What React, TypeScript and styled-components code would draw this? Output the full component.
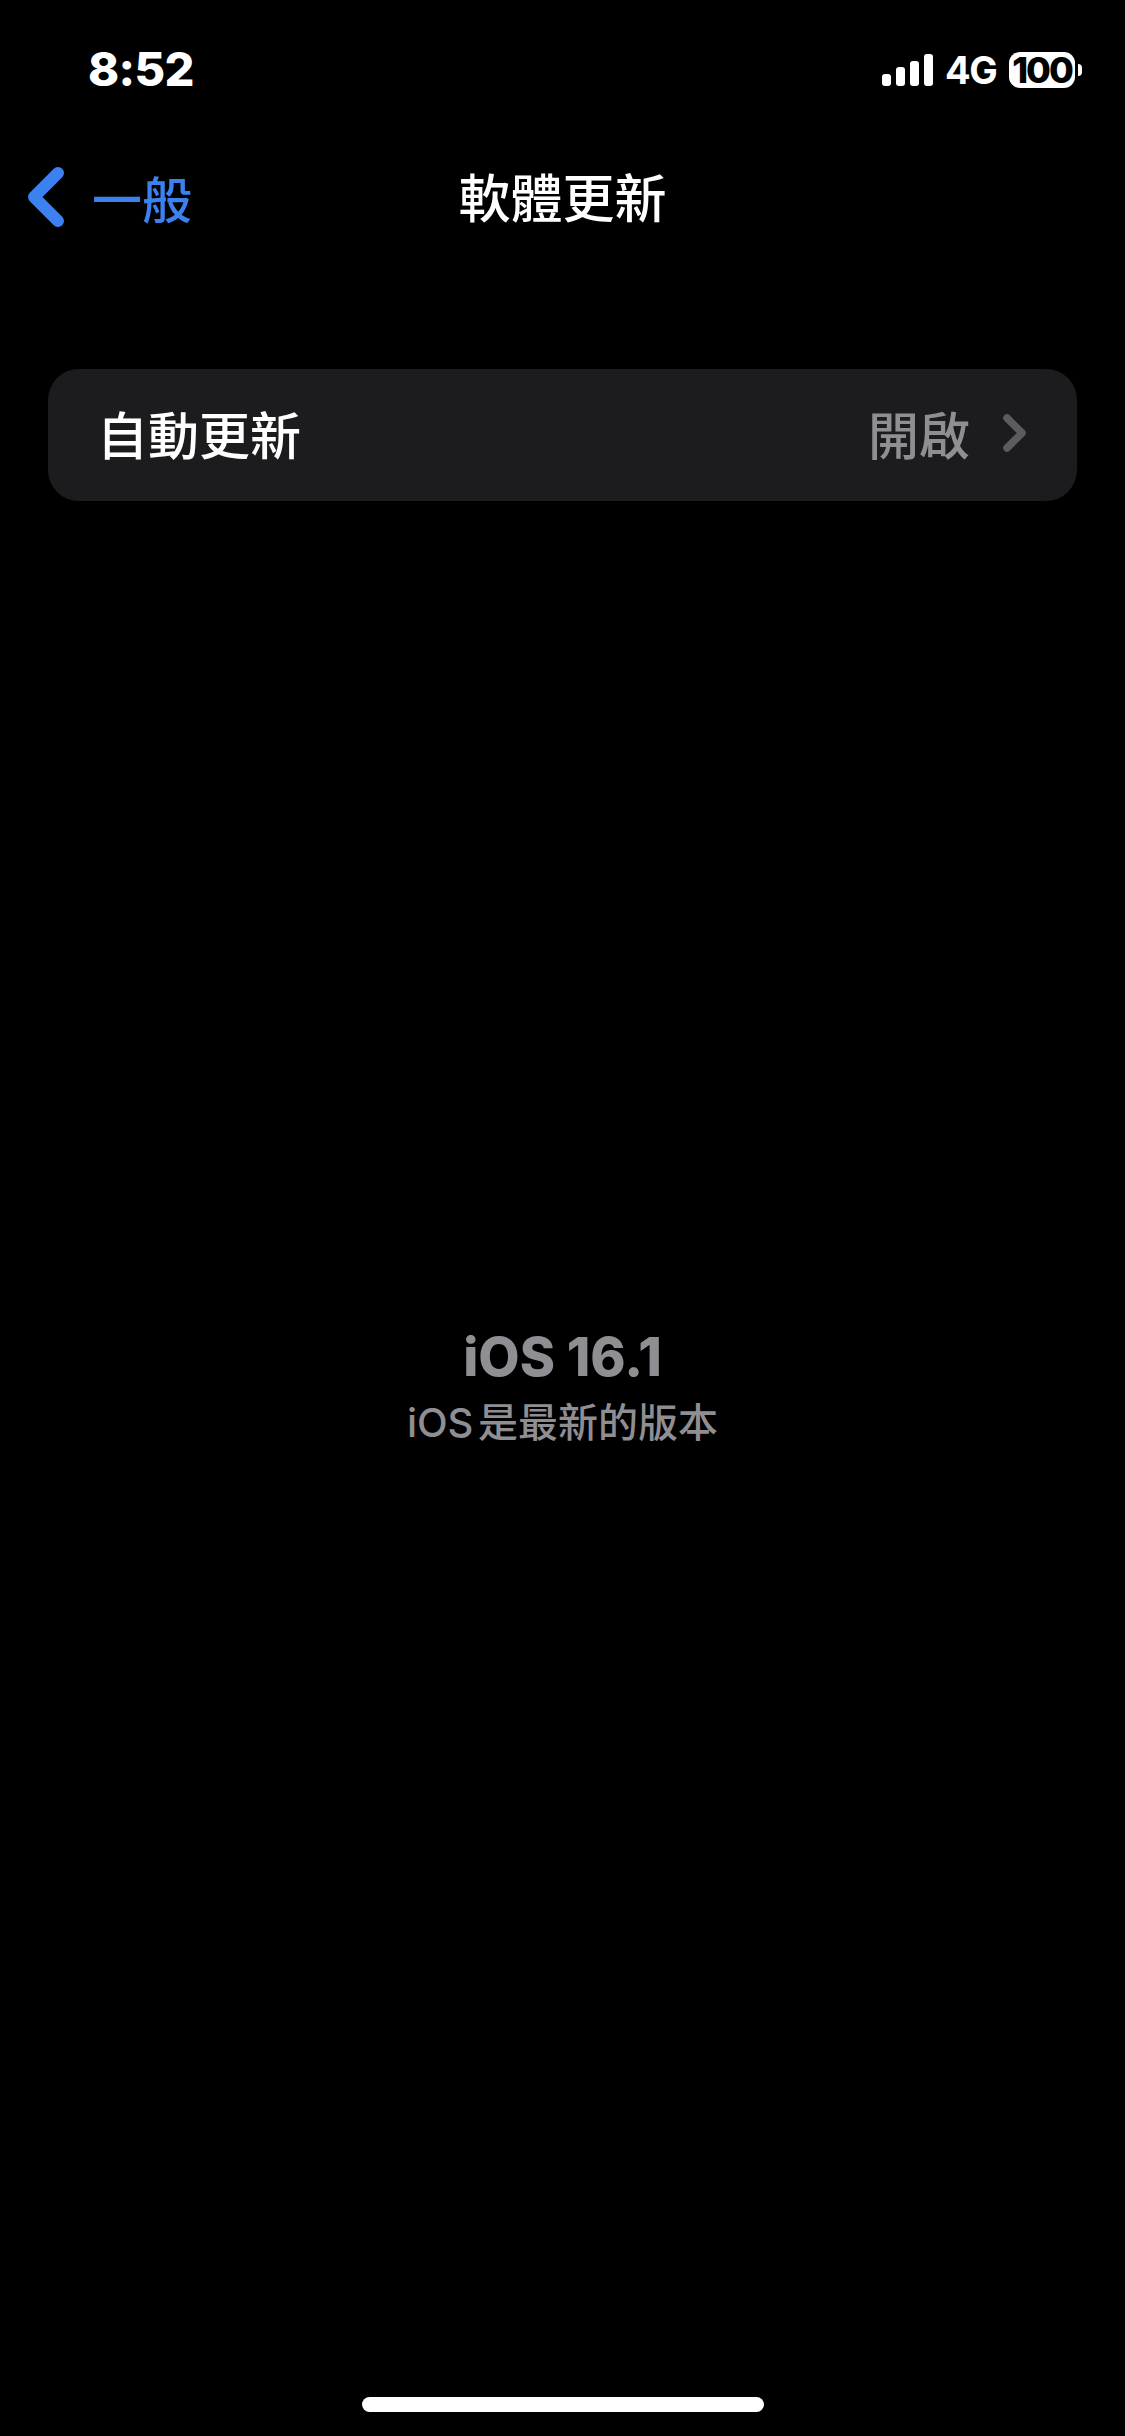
import React from "react";
import styled, { createGlobalStyle } from "styled-components";

const Global = createGlobalStyle`
  html, body { margin: 0; padding: 0; background: #000; }
  body { font-family: Inter, "Noto Sans CJK TC", sans-serif; }
`;

const Screen = styled.div`
  width: 1125px;
  height: 2436px;
  background: #000;
  color: #fff;
  display: flex;
  flex-direction: column;
  overflow: hidden;
`;

const StatusBar = styled.header`
  height: 136px;
  box-sizing: border-box;
  padding: 44px 43px 0 88px;
  display: flex;
  justify-content: space-between;
  align-items: flex-start;
`;

const Clock = styled.span`
  font-size: 47px;
  font-weight: 800;
  line-height: 50px;
  letter-spacing: -0.6px;
`;

const StatusIcons = styled.div`
  display: flex;
  align-items: center;
  height: 50px;
  margin-top: 1px;
`;

const Network = styled.span`
  font-size: 38px;
  font-weight: 700;
  line-height: 50px;
  letter-spacing: -1.5px;
  width: 48px;
  margin: 0 16px 0 12px;
`;

const BatteryBody = styled.span`
  width: 66px;
  height: 36px;
  background: #fff;
  border-radius: 11px;
  color: #000;
  font-size: 36px;
  font-weight: 800;
  letter-spacing: -2px;
  display: flex;
  align-items: center;
  justify-content: center;
`;

const BatteryNub = styled.span`
  width: 4px;
  height: 12px;
  margin-left: 3px;
  background: #fff;
  border-radius: 0 4px 4px 0;
`;

const NavBar = styled.nav`
  height: 122px;
  display: grid;
  grid-template-columns: 1fr auto 1fr;
  align-items: center;
  margin-bottom: 111px;
`;

const BackLink = styled.a`
  display: flex;
  align-items: center;
  gap: 28px;
  padding-left: 28px;
  color: #3b82f0;
  font-size: 50px;
  font-weight: 500;
`;

const Title = styled.h1`
  margin: 0;
  padding-top: 5px;
  font-size: 52px;
  font-weight: 500;
  line-height: 60px;
  white-space: nowrap;
`;

const Card = styled.section`
  margin: 0 48px;
  height: 132px;
  box-sizing: border-box;
  padding: 0 50px 4px 49px;
  background: #1c1c1e;
  border-radius: 31px;
  display: flex;
  align-items: center;
  justify-content: space-between;
`;

const RowLabel = styled.span`
  font-size: 51px;
  font-weight: 500;
`;

const RowValue = styled.span`
  display: flex;
  align-items: center;
  gap: 33px;
  color: #8e8e93;
  font-size: 51px;
  font-weight: 500;
`;

const Message = styled.div`
  margin-top: 825px;
  display: flex;
  flex-direction: column;
  align-items: center;
`;

const Version = styled.div`
  color: #8e8e93;
  font-size: 53.5px;
  font-weight: 800;
  line-height: 62px;
`;

const Subtitle = styled.div`
  color: #8e8e93;
  font-size: 40px;
  font-weight: 500;
  line-height: 48px;
  word-spacing: -6px;
  margin-top: 11px;
`;

const Spacer = styled.div`
  flex: 1;
`;

const HomeIndicator = styled.div`
  align-self: center;
  width: 402px;
  height: 15px;
  margin-bottom: 24px;
  background: #fff;
  border-radius: 8px;
`;

const Signal = () => (
  <svg width="51" height="32" viewBox="0 0 51 32" fill="#fff">
    <rect x="0" y="20" width="9" height="12" rx="3" />
    <rect x="14" y="13" width="9" height="19" rx="3" />
    <rect x="28" y="7" width="9" height="25" rx="3" />
    <rect x="42" y="0" width="9" height="32" rx="3" />
  </svg>
);

const BackChevron = () => (
  <svg width="36" height="60" viewBox="0 0 36 60" fill="none">
    <path d="M30 6 L6 30 L30 54" stroke="currentColor" strokeWidth="12" strokeLinecap="round" strokeLinejoin="round" />
  </svg>
);

const RowChevron = () => (
  <svg width="24" height="38" viewBox="0 0 24 38" fill="none">
    <path d="M4 4 L19 19 L4 34" stroke="#5c5c60" strokeWidth="7.5" strokeLinecap="round" strokeLinejoin="round" />
  </svg>
);

export default function App() {
  return (
    <Screen>
      <Global />
      <StatusBar>
        <Clock>8:52</Clock>
        <StatusIcons>
          <Signal />
          <Network>4G</Network>
          <BatteryBody>100</BatteryBody>
          <BatteryNub />
        </StatusIcons>
      </StatusBar>
      <NavBar>
        <BackLink>
          <BackChevron />
          一般
        </BackLink>
        <Title>軟體更新</Title>
        <span />
      </NavBar>
      <Card>
        <RowLabel>自動更新</RowLabel>
        <RowValue>
          開啟
          <RowChevron />
        </RowValue>
      </Card>
      <Message>
        <Version>iOS 16.1</Version>
        <Subtitle>iOS 是最新的版本</Subtitle>
      </Message>
      <Spacer />
      <HomeIndicator />
    </Screen>
  );
}
